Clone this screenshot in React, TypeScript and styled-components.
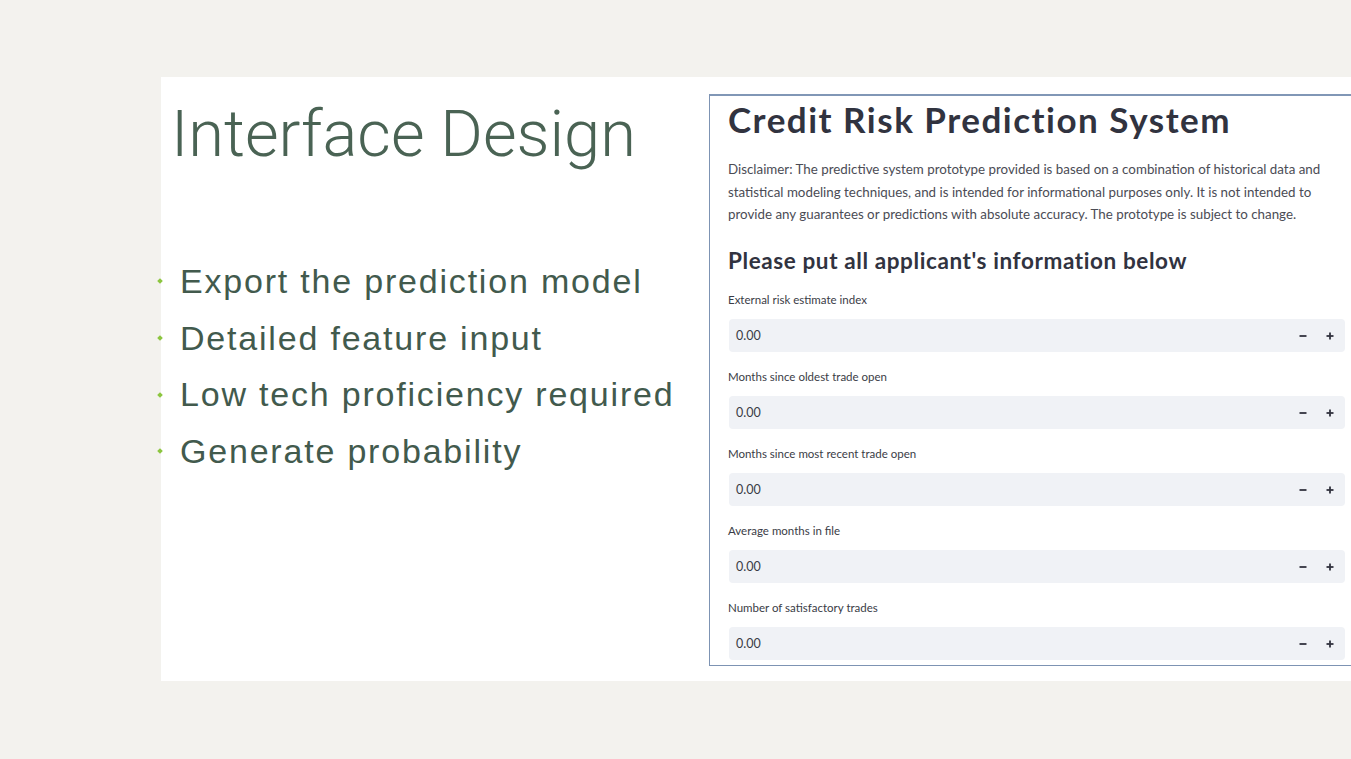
import React from "react";
import styled, { createGlobalStyle } from "styled-components";

const Global = createGlobalStyle`
  html, body { margin: 0; padding: 0; background: #f3f2ee; overflow: hidden; }
  body { width: 1351px; height: 759px; }
`;

const Page = styled.div`
  padding-top: 77px;
  padding-left: 161px;
  height: 759px;
  box-sizing: border-box;
`;

const Slide = styled.div`
  display: flex;
  width: 1200px;
  height: 604px;
  background: #ffffff;
`;

const LeftCol = styled.div`
  width: 548px;
  flex: none;
  padding-top: 25px;
  box-sizing: border-box;
`;

const Title = styled.h1`
  margin: 0 0 0 10px;
  font-family: Roboto, "Liberation Sans", sans-serif;
  font-weight: 300;
  font-size: 65px;
  line-height: 65px;
  color: #4a6354;
  white-space: nowrap;
`;

const Bullets = styled.ul`
  list-style: none;
  margin: 86px 0 0 -4px;
  padding: 0;
`;

const Bullet = styled.li`
  display: flex;
  align-items: center;
  gap: 18px;
  height: 56.7px;
  font-family: "Liberation Sans", Arial, sans-serif;
  font-size: 34px;
  letter-spacing: 1.8px;
  color: #425a4d;
  white-space: nowrap;
  &::before {
    content: "";
    width: 4px;
    height: 4px;
    background: #8cc63f;
    transform: rotate(45deg);
    flex: none;
    margin-left: 1px;
  }
`;

const Panel = styled.div`
  width: 652px;
  flex: none;
  margin-top: 17px;
  height: 572px;
  box-sizing: border-box;
  border: 1px solid #7d93b3;
  border-top: 2px solid #8197b6;
  padding: 2px 15px 0 19px;
  font-family: Lato, "Noto Sans", sans-serif;
  color: #31333f;
`;

const Heading = styled.h2`
  margin: 0 0 0 -1px;
  font-size: 35px;
  line-height: 42px;
  font-weight: 700;
  letter-spacing: 1.5px;
  white-space: nowrap;
`;

const Disclaimer = styled.p`
  margin: 18px 0 0 -1px;
  font-size: 13.35px;
  line-height: 22.5px;
  color: #4b4c55;
  white-space: nowrap;
`;

const SubHeading = styled.h3`
  margin: 22px 0 0 -1px;
  font-size: 22.5px;
  line-height: 26.4px;
  font-weight: 700;
  letter-spacing: 0.6px;
  white-space: nowrap;
`;

const Fields = styled.div`
  display: flex;
  flex-direction: column;
  gap: 14.5px;
  margin-top: 16px;
`;

const Field = styled.div`
  display: flex;
  flex-direction: column;
  gap: 9.5px;
`;

const Label = styled.label`
  font-size: 11.5px;
  line-height: 20px;
  color: #3a3c46;
  margin-left: -1px;
`;

const InputBox = styled.div`
  display: flex;
  align-items: center;
  height: 33px;
  background: #f0f2f6;
  border-radius: 4px;
  padding: 0 10px 0 7px;
`;

const Value = styled.span`
  flex: 1;
  font-size: 12.5px;
  color: #3a3c46;
`;

const StepButton = styled.span`
  display: flex;
  align-items: center;
  justify-content: center;
  width: 10px;
  height: 12px;
  margin-left: 17px;
`;

const MinusIcon = () => (
  <svg width="8" height="8" viewBox="0 0 8 8">
    <line x1="0.5" y1="4" x2="7.5" y2="4" stroke="#31333f" strokeWidth="1.8" />
  </svg>
);

const PlusIcon = () => (
  <svg width="8" height="8" viewBox="0 0 8 8">
    <line x1="0.5" y1="4" x2="7.5" y2="4" stroke="#31333f" strokeWidth="1.8" />
    <line x1="4" y1="0.5" x2="4" y2="7.5" stroke="#31333f" strokeWidth="1.8" />
  </svg>
);

const fields = [
  "External risk estimate index",
  "Months since oldest trade open",
  "Months since most recent trade open",
  "Average months in file",
  "Number of satisfactory trades",
];

const bullets = [
  "Export the prediction model",
  "Detailed feature input",
  "Low tech proficiency required",
  "Generate probability",
];

export default function App() {
  return (
    <>
      <Global />
      <Page>
        <Slide>
          <LeftCol>
            <Title>Interface Design</Title>
            <Bullets>
              {bullets.map((b) => (
                <Bullet key={b}>{b}</Bullet>
              ))}
            </Bullets>
          </LeftCol>
          <Panel>
            <Heading>Credit Risk Prediction System</Heading>
            <Disclaimer>
              Disclaimer: The predictive system prototype provided is based on a combination of historical data and
              <br />
              statistical modeling techniques, and is intended for informational purposes only. It is not intended to
              <br />
              provide any guarantees or predictions with absolute accuracy. The prototype is subject to change.
            </Disclaimer>
            <SubHeading>Please put all applicant's information below</SubHeading>
            <Fields>
              {fields.map((f) => (
                <Field key={f}>
                  <Label>{f}</Label>
                  <InputBox>
                    <Value>0.00</Value>
                    <StepButton>
                      <MinusIcon />
                    </StepButton>
                    <StepButton>
                      <PlusIcon />
                    </StepButton>
                  </InputBox>
                </Field>
              ))}
            </Fields>
          </Panel>
        </Slide>
      </Page>
    </>
  );
}
